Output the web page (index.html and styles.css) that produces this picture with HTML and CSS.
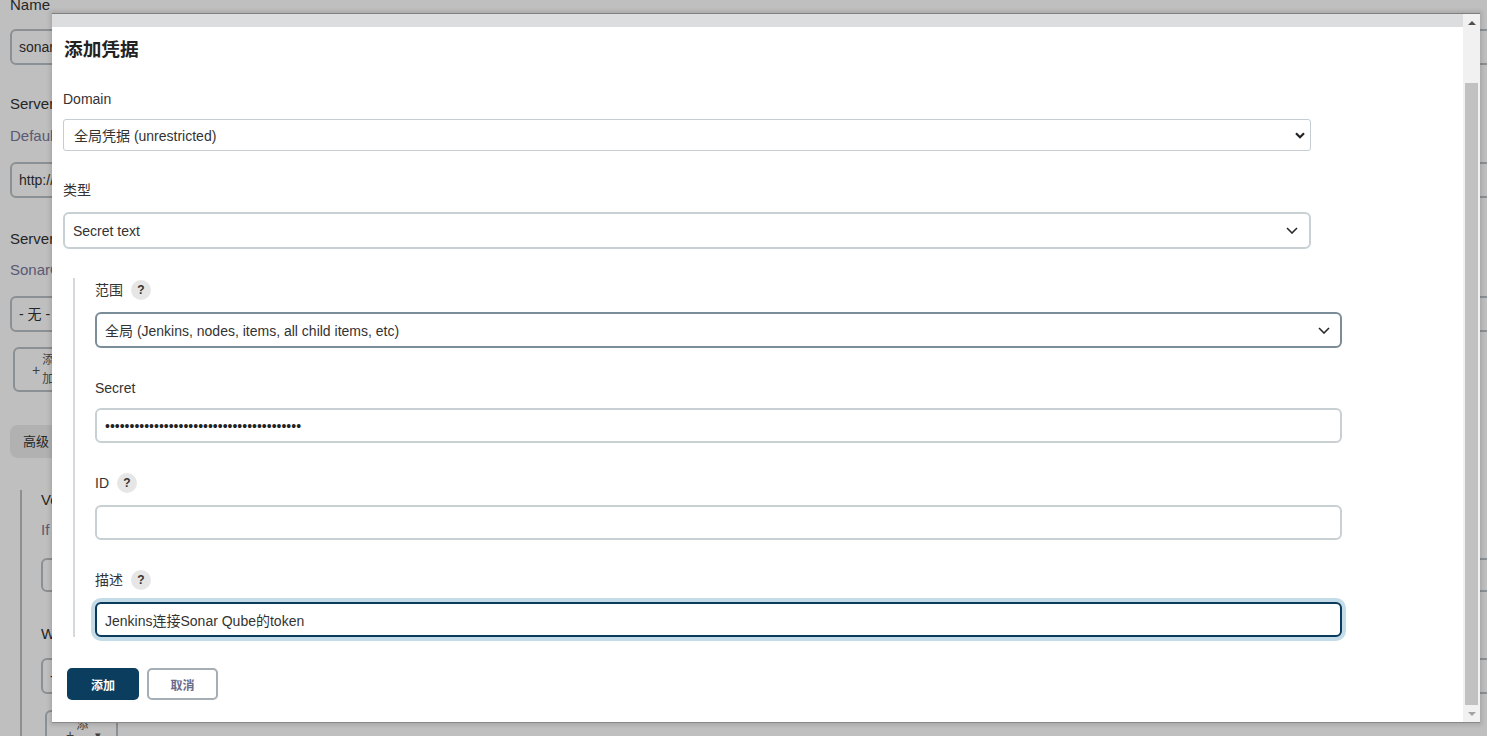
FILE: index.html
```html
<!DOCTYPE html>
<html lang="zh-CN">
<head>
<meta charset="utf-8">
<title>添加凭据</title>
<link rel="stylesheet" href="styles.css">
</head>
<body>
<div class="page">
  <div class="bg-label bg-first">Name</div>
  <div class="bg-input bg-m14">sonarqube</div>
  <div class="bg-label bg-m29">Server URL</div>
  <div class="bg-desc bg-m12">Default is http://localhost:9000</div>
  <div class="bg-input bg-m16">http://192.168.1.10:9000</div>
  <div class="bg-label bg-m31">Server authentication token</div>
  <div class="bg-desc bg-m11">SonarQube authentication token. Mandatory when anonymous access is disabled.</div>
  <div class="bg-input bg-m16">- 无 -</div>
  <div class="bg-btn bg-m15"><span class="bg-plus">+</span><span class="bg-narrow">添加</span></div>
  <div class="bg-adv bg-m33">高级</div>
  <div class="bg-nested bg-m32">
    <div class="bg-label">Version of sonar-maven-plugin</div>
    <div class="bg-desc bg-m10">If not specified, the default version will be used.</div>
    <div class="bg-input bg-input--short bg-m18"></div>
    <div class="bg-label bg-m32">Webhook Secret</div>
    <div class="bg-input bg-m14">- 无 -</div>
    <div class="bg-btn bg-btn--drop bg-m16"><span class="bg-plus">+</span><span class="bg-narrow">添加</span><span class="bg-caret">▾</span></div>
  </div>
</div>
<div class="overlay"></div>
<div class="dialog" role="dialog" aria-label="添加凭据">
  <div class="dialog-main">
    <div class="dialog-bar"></div>
    <div class="dialog-body">
      <h1 class="dialog-title">添加凭据</h1>
      <div class="form">
        <div class="field field--top">
          <div class="field-label">Domain</div>
          <div class="control control--native">
            <span>全局凭据 (unrestricted)</span>
            <svg class="chev-bold" width="10" height="7" viewBox="0 0 10 7"><path d="M1 1.2 L5 5.2 L9 1.2" fill="none" stroke="#222" stroke-width="2.2"/></svg>
          </div>
        </div>
        <div class="field field--top">
          <div class="field-label field-label--loose">类型</div>
          <div class="control control--select">
            <span>Secret text</span>
            <svg width="12" height="7" viewBox="0 0 12 7"><path d="M1 1 L6 6 L11 1" fill="none" stroke="#2a2a2a" stroke-width="1.6"/></svg>
          </div>
        </div>
        <div class="nested">
          <div class="field">
            <div class="field-label field-label--loose">范围 <span class="help">?</span></div>
            <div class="control control--select control--hover">
              <span>全局 (Jenkins, nodes, items, all child items, etc)</span>
              <svg width="12" height="7" viewBox="0 0 12 7"><path d="M1 1 L6 6 L11 1" fill="none" stroke="#2a2a2a" stroke-width="1.6"/></svg>
            </div>
          </div>
          <div class="field">
            <div class="field-label">Secret</div>
            <div class="control control--input"><span class="dots">••••••••••••••••••••••••••••••••••••••••</span></div>
          </div>
          <div class="field">
            <div class="field-label field-label--loose">ID <span class="help">?</span></div>
            <div class="control control--input"></div>
          </div>
          <div class="field">
            <div class="field-label field-label--loose">描述 <span class="help">?</span></div>
            <div class="control control--input control--focus"><span>Jenkins连接Sonar Qube的token</span></div>
          </div>
        </div>
        <div class="actions">
          <button class="btn btn--primary" type="button">添加</button>
          <button class="btn btn--secondary" type="button">取消</button>
        </div>
      </div>
    </div>
  </div>
  <div class="scrollbar">
    <div class="sb-btn"><span class="tri-up"></span></div>
    <div class="sb-track"><div class="sb-thumb"></div></div>
    <div class="sb-btn"><span class="tri-down"></span></div>
  </div>
</div>
</body>
</html>
```

FILE: styles.css
```css
* { box-sizing: border-box; }
html, body { margin: 0; padding: 0; }
body {
  width: 1487px;
  height: 736px;
  overflow: hidden;
  position: relative;
  background: #fff;
  color: #333;
  font-family: "Liberation Sans", Arial, "Noto Sans CJK SC", sans-serif;
  font-size: 14px;
}

/* ---------- background page ---------- */
.page { padding-left: 10px; }
.bg-label { height: 20px; line-height: 20px; white-space: nowrap; color: #333; font-size: 15px; }
.bg-first { margin-top: -5px; }
.bg-desc { height: 20px; line-height: 20px; white-space: nowrap; color: #78789a; font-size: 15px; }
.bg-input {
  width: 1520px;
  height: 36px;
  border: 2px solid #b9c0c4;
  border-radius: 6px;
  padding: 0 7px;
  line-height: 32px;
  white-space: nowrap;
  font-size: 14px;
}
.bg-btn {
  margin-left: 3px;
  width: 80px;
  height: 45px;
  border: 2px solid #b9c0c4;
  border-radius: 6px;
  display: flex;
  align-items: center;
  padding-left: 17px;
  gap: 2px;
  color: #555;
}
.bg-plus { font-size: 14px; }
.bg-narrow { width: 13px; font-size: 12px; line-height: 19px; }
.bg-btn--drop { margin-left: 4px; width: 73px; height: 50px; padding-left: 19px; }
.bg-caret { font-size: 11px; margin-left: 4px; }
.bg-adv {
  width: 90px;
  height: 33px;
  background: #ececec;
  border-radius: 8px;
  padding-left: 13px;
  line-height: 33px;
  font-size: 13px;
}
.bg-nested {
  margin-left: 10px;
  border-left: 2px solid #bcc1c4;
  padding-left: 19px;
  height: 400px;
}
.bg-m10 { margin-top: 10px; }
.bg-m11 { margin-top: 11px; }
.bg-m12 { margin-top: 12px; }
.bg-m14 { margin-top: 14px; }
.bg-m15 { margin-top: 15px; }
.bg-m16 { margin-top: 16px; }
.bg-m18 { margin-top: 18px; }
.bg-m29 { margin-top: 29px; }
.bg-m31 { margin-top: 31px; }
.bg-m32 { margin-top: 32px; }
.bg-m33 { margin-top: 33px; }
.bg-input--short { height: 34px; }

.overlay {
  position: absolute;
  inset: 0;
  background: rgba(0, 0, 0, 0.25);
}

/* ---------- dialog ---------- */
.dialog {
  position: absolute;
  left: 52px;
  top: 13px;
  width: 1428px;
  height: 710px;
  display: flex;
  background: #fff;
  border-top: 1px solid #7f7f7f;
  border-bottom: 1px solid #8a8a8a;
  box-shadow: 0 0 4px 2px rgba(0, 0, 0, 0.12);
}
.dialog-main {
  flex: 1;
  min-width: 0;
  overflow: hidden;
  display: flex;
  flex-direction: column;
}
.dialog-bar { height: 13px; flex-shrink: 0; background: #dcdddf; }
.dialog-body { padding: 0 11px; }
.dialog-title {
  margin: 11px 0 0 1px;
  font-size: 18.7px;
  line-height: 24px;
  font-weight: 700;
  color: #222;
}
.form { margin-top: 27px; }

.field { margin-bottom: 29px; }
.field--top { width: 1248px; }
.field-label {
  display: flex;
  align-items: center;
  gap: 8px;
  height: 20px;
  line-height: 20px;
  margin-bottom: 10px;
  color: #333;
}
.field-label--loose { margin-bottom: 12px; }
.help {
  width: 20px;
  height: 20px;
  border-radius: 50%;
  background: #e6e6e6;
  color: #333;
  font-size: 12px;
  font-weight: 700;
  display: flex;
  align-items: center;
  justify-content: center;
}

.control {
  display: flex;
  align-items: center;
  justify-content: space-between;
  background: #fff;
  color: #333;
  white-space: nowrap;
}
.control--native {
  height: 32px;
  border: 1px solid #c5cdd2;
  border-radius: 3px;
  padding: 0 5px 0 10px;
}
.control--select {
  height: 37px;
  border: 2px solid #c8d0d4;
  border-radius: 6px;
  padding: 0 11px 0 8px;
}
.control--hover { height: 36px; border-color: #7b8d99; padding-right: 10px; }
.control--input {
  height: 35px;
  border: 2px solid #c8d0d4;
  border-radius: 6px;
  padding: 0 8px;
}
.control--focus {
  border-color: #0a3a5c;
  box-shadow: 0 0 0 4px #c4dbe8;
}
.dots { font-size: 14px; color: #222; }

.nested {
  margin-left: 10px;
  border-left: 2px solid #d3d9dc;
  padding-left: 20px;
  padding-top: 2px;
  width: 1269px;
}
.nested .field { margin-bottom: 30px; }
.nested .field:last-child { margin-bottom: 0; }

.actions { margin-top: 31px; margin-left: 4px; display: flex; gap: 8px; }
.btn {
  height: 32px;
  border-radius: 5px;
  font-family: inherit;
  font-size: 12px;
  font-weight: 700;
  display: flex;
  align-items: center;
  justify-content: center;
  padding: 0;
  cursor: pointer;
}
.btn--primary { width: 72px; background: #0b3d5e; color: #fff; border: none; }
.btn--secondary { width: 71px; background: #fff; color: #696b8a; border: 2px solid #a5aeb5; }

/* ---------- scrollbar ---------- */
.scrollbar {
  width: 17px;
  flex-shrink: 0;
  background: #f1f1f1;
  display: flex;
  flex-direction: column;
}
.sb-btn {
  height: 17px;
  flex-shrink: 0;
  display: flex;
  align-items: center;
  justify-content: center;
}
.tri-up {
  width: 0; height: 0;
  border-left: 4px solid transparent;
  border-right: 4px solid transparent;
  border-bottom: 4px solid #505050;
}
.tri-down {
  width: 0; height: 0;
  border-left: 4px solid transparent;
  border-right: 4px solid transparent;
  border-top: 4px solid #a3a3a3;
}
.sb-track {
  flex: 1;
  display: flex;
  flex-direction: column;
  justify-content: flex-end;
  padding: 0 2px;
}
.sb-thumb { height: 622px; background: #c1c1c1; }
```
